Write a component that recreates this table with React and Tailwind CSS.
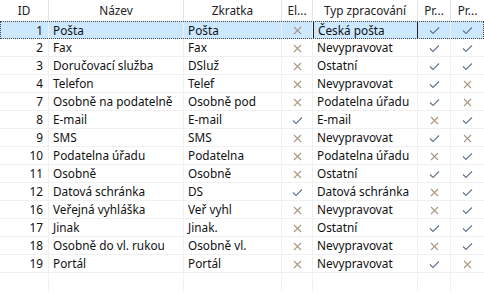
import React from 'react';

const COLS = [
  { key: 'id', title: 'ID', w: 'w-[49px]' },
  { key: 'name', title: 'Název', w: 'w-[135px]' },
  { key: 'short', title: 'Zkratka', w: 'w-[98px]' },
  { key: 'el', title: 'El...', w: 'w-[31px]' },
  { key: 'type', title: 'Typ zpracování', w: 'w-[105px]' },
  { key: 'p1', title: 'Pr...', w: 'w-[33px]' },
  { key: 'p2', title: 'Pr...', w: 'w-[33px]' },
];

const rows = [
  [1, 'Pošta', 'Pošta', 0, 'Česká pošta', 1, 1],
  [2, 'Fax', 'Fax', 0, 'Nevypravovat', 1, 1],
  [3, 'Doručovací služba', 'DSluž', 0, 'Ostatní', 1, 1],
  [4, 'Telefon', 'Telef', 0, 'Nevypravovat', 1, 0],
  [7, 'Osobně na podatelně', 'Osobně pod', 0, 'Podatelna úřadu', 1, 0],
  [8, 'E-mail', 'E-mail', 1, 'E-mail', 0, 1],
  [9, 'SMS', 'SMS', 0, 'Nevypravovat', 1, 0],
  [10, 'Podatelna úřadu', 'Podatelna', 0, 'Podatelna úřadu', 0, 1],
  [11, 'Osobně', 'Osobně', 0, 'Ostatní', 1, 1],
  [12, 'Datová schránka', 'DS', 1, 'Datová schránka', 0, 1],
  [16, 'Veřejná vyhláška', 'Veř vyhl', 0, 'Nevypravovat', 0, 1],
  [17, 'Jinak', 'Jinak.', 0, 'Ostatní', 1, 1],
  [18, 'Osobně do vl. rukou', 'Osobně vl.', 0, 'Nevypravovat', 0, 1],
  [19, 'Portál', 'Portál', 0, 'Nevypravovat', 1, 0],
];

const Check = () => (
  <svg width="11" height="9" viewBox="0 0 11 9">
    <polyline points="1,4.5 4,7.5 10,1.5" fill="none" stroke="#62758e" strokeWidth="1.1" />
  </svg>
);

const Cross = () => (
  <svg width="9" height="9" viewBox="0 0 9 9">
    <path d="M1 1 L8 8 M8 1 L1 8" fill="none" stroke="#ab9883" strokeWidth="1.1" />
  </svg>
);

const Flag = ({ on }) => (on ? <Check /> : <Cross />);

export default function App() {
  return (
    <div className="w-[484px] h-[300px] overflow-hidden bg-white text-[11.8px] text-[#111] font-['Noto_Sans',sans-serif]">
      {/* header */}
      <div className="flex h-[21px]">
        {COLS.map((c, i) => (
          <div
            key={i}
            className={`${c.w} shrink-0 flex items-center justify-center pt-px text-[#222] ${i < COLS.length - 1 ? 'border-r border-[#e5e5e5]' : ''}`}
          >
            {c.title}
          </div>
        ))}
      </div>

      {rows.map((r, ri) => {
        const sel = ri === 0;
        return (
          <div
            key={ri}
            className={`flex h-[18px] ${sel ? 'bg-[#cce8ff] outline outline-1 outline-dotted outline-[#444] -outline-offset-1' : 'border-b border-[#f0f0f0]'}`}
          >
            <div className="w-[49px] shrink-0 flex items-center justify-end pt-px pr-[5px] border-r border-[#f0f0f0]">{r[0]}</div>
            <div className="w-[135px] shrink-0 flex items-center pt-px pl-[4px] border-r border-[#f0f0f0] whitespace-nowrap overflow-hidden">{r[1]}</div>
            <div className="w-[98px] shrink-0 flex items-center pt-px pl-[4px] border-r border-[#f0f0f0] whitespace-nowrap overflow-hidden">{r[2]}</div>
            <div className="w-[31px] shrink-0 flex items-center justify-center pt-px border-r border-[#f0f0f0]"><Flag on={r[3]} /></div>
            <div className={`w-[105px] shrink-0 flex items-center pt-px pl-[4px] whitespace-nowrap overflow-hidden ${sel ? 'border-l border-r border-[#222]' : 'border-r border-[#f0f0f0]'}`}>{r[4]}</div>
            <div className="w-[33px] shrink-0 flex items-center justify-center pt-px border-r border-[#f0f0f0]"><Flag on={r[5]} /></div>
            <div className="w-[33px] shrink-0 flex items-center justify-center pt-px"><Flag on={r[6]} /></div>
          </div>
        );
      })}

      {/* empty trailing row */}
      <div className="flex h-[18px]">
        {COLS.map((c, i) => (
          <div key={i} className={`${c.w} shrink-0 ${i < COLS.length - 1 ? 'border-r border-[#f0f0f0]' : ''}`} />
        ))}
      </div>
    </div>
  );
}
